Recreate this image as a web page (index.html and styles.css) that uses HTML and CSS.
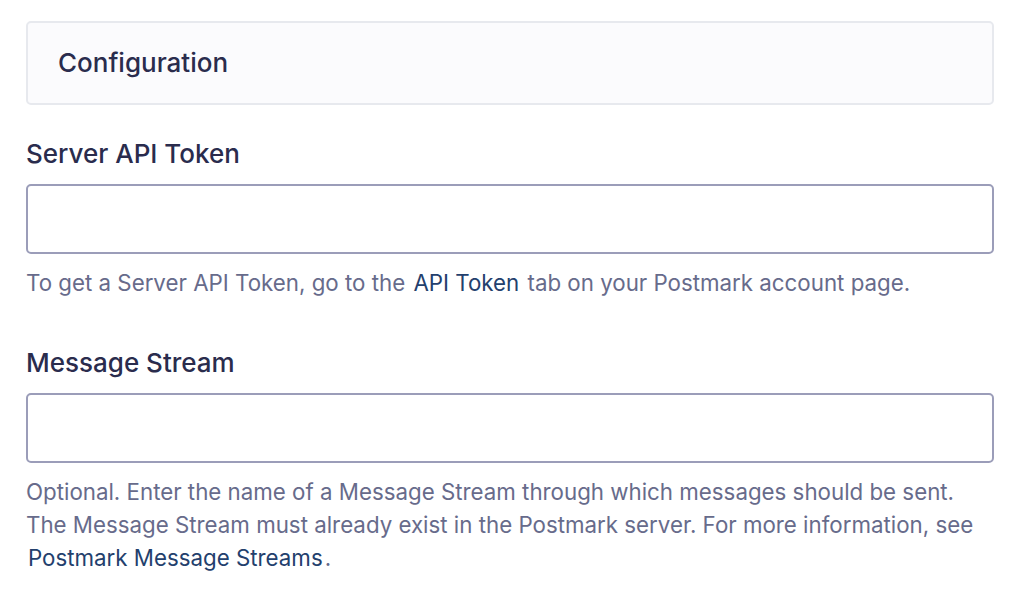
FILE: index.html
```html
<!DOCTYPE html>
<html lang="en">
<head>
<meta charset="utf-8">
<link rel="stylesheet" href="styles.css">
</head>
<body>
<div class="page">
  <div class="section-header">
    <h2 class="section-title">Configuration</h2>
  </div>
  <div class="field field-first">
    <label class="field-label">Server API Token</label>
    <input class="field-input" type="text">
    <p class="field-help">To get a Server API Token, go to the <a class="help-link" href="#">API Token</a> tab on your Postmark account page.</p>
  </div>
  <div class="field field-second">
    <label class="field-label">Message Stream</label>
    <input class="field-input" type="text">
    <p class="field-help">Optional. Enter the name of a Message Stream through which messages should be sent. The Message Stream must already exist in the Postmark server. For more information, see <a class="help-link" href="#">Postmark Message Streams</a>.</p>
  </div>
</div>
</body>
</html>
```
FILE: styles.css
```css
* { box-sizing: border-box; }
html, body { margin: 0; padding: 0; background: #ffffff; }
body { font-family: Inter, "Noto Sans", sans-serif; }
.page { padding: 21px 30px 0 26px; }
.section-header {
  height: 84px;
  border: 2px solid #e7e9ee;
  border-radius: 5px;
  background: #fbfbfd;
  display: flex;
  align-items: center;
  padding-left: 30px;
}
.section-title {
  margin: 0;
  font-size: 26px;
  font-weight: 500;
  color: #2a2c4d;
  line-height: 32px;
}
.field { display: flex; flex-direction: column; }
.field-first { margin-top: 33px; }
.field-second { margin-top: 48px; }
.field-label {
  font-size: 26px;
  font-weight: 500;
  color: #2a2c4d;
  line-height: 32px;
}
.field-input {
  margin-top: 14px;
  height: 70px;
  width: 100%;
  border: 2px solid #9b9db9;
  border-radius: 5px;
  background: #fff;
  font: inherit;
}
.field-help {
  margin: 12px 0 0;
  font-size: 22.3px;
  line-height: 33px;
  color: #676b8b;
}
.help-link {
  color: #23406d;
  text-decoration: none;
  padding: 0 2px;
}
```
